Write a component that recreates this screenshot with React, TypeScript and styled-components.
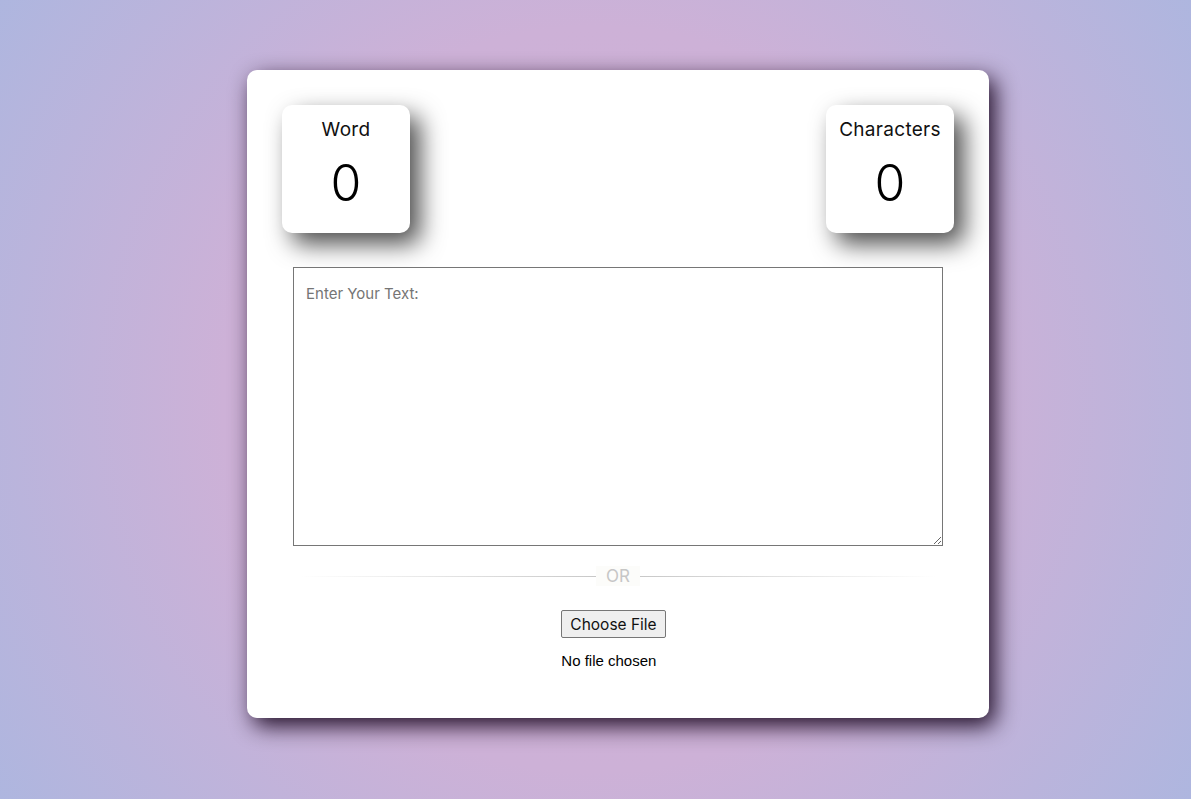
import React from "react";
import styled, { createGlobalStyle } from "styled-components";

const GlobalStyle = createGlobalStyle`
  html, body {
    margin: 0;
    padding: 0;
  }
  body {
    min-height: 799px;
    background: radial-gradient(circle at 50% 50%, #d2b0d6 0%, #cdb1d7 52%, #aeb6df 100%);
    font-family: Inter, "Open Sans", sans-serif;
  }
`;

const Page = styled.div`
  min-height: 799px;
  box-sizing: border-box;
  padding: 70px 0 0 247px;
`;

const Card = styled.main`
  width: 742px;
  height: 648px;
  box-sizing: border-box;
  background: #ffffff;
  border-radius: 10px;
  padding: 35px;
  box-shadow: 6px 8px 22px rgba(20, 0, 25, 0.92);
  display: flex;
  flex-direction: column;
  align-items: center;
`;

const StatsRow = styled.div`
  width: 100%;
  display: flex;
  justify-content: space-between;
`;

const StatBox = styled.div`
  width: 128px;
  height: 128px;
  border-radius: 10px;
  background: #ffffff;
  box-shadow: 10px 11px 25px rgba(0, 0, 0, 0.7);
  display: flex;
  flex-direction: column;
  align-items: center;
  box-sizing: border-box;
  padding-top: 14px;
`;

const StatLabel = styled.div`
  font-size: 19px;
  letter-spacing: 0.3px;
  line-height: 22px;
  color: #111;
`;

const StatValue = styled.div`
  font-size: 50px;
  line-height: 60px;
  margin-top: 12px;
  color: #000;
  font-weight: 300;
`;

const TextArea = styled.textarea`
  margin-top: 34px;
  width: 650px;
  height: 279px;
  box-sizing: border-box;
  border: 1px solid #767676;
  border-radius: 0;
  padding: 16px 12px;
  font-family: Inter, "Open Sans", sans-serif;
  font-size: 15px;
  color: #222;
  &::placeholder {
    color: #757575;
  }
`;

const Divider = styled.div`
  width: 636px;
  margin-top: 20px;
  display: flex;
  align-items: center;
`;

const Line = styled.div<{ $dir: "left" | "right" }>`
  flex: 1;
  height: 1px;
  background: linear-gradient(
    to ${(p) => p.$dir},
    rgba(200, 200, 200, 0),
    rgba(200, 200, 200, 1)
  );
`;

const OrLabel = styled.span`
  padding: 0 10px;
  font-size: 17px;
  line-height: 20px;
  color: #c6c6c6;
  background: #fcfcfa;
`;

const FileArea = styled.div`
  margin-top: 24px;
  margin-right: 9px;
  display: flex;
  flex-direction: column;
  align-items: flex-start;
`;

const FileButton = styled.button`
  height: 28px;
  padding: 0 8px;
  border: 1px solid #767676;
  border-radius: 2px;
  background: #efefef;
  font-family: Inter, "Open Sans", sans-serif;
  font-size: 15.5px;
  color: #111;
`;

const FileStatus = styled.span`
  margin-top: 14px;
  font-family: "Liberation Sans", Arial, sans-serif;
  font-size: 15px;
  line-height: 18px;
  color: #000;
`;

export default function App() {
  return (
    <>
      <GlobalStyle />
      <Page>
        <Card>
          <StatsRow>
            <StatBox>
              <StatLabel>Word</StatLabel>
              <StatValue>0</StatValue>
            </StatBox>
            <StatBox>
              <StatLabel>Characters</StatLabel>
              <StatValue>0</StatValue>
            </StatBox>
          </StatsRow>
          <TextArea placeholder="Enter Your Text:" />
          <Divider>
            <Line $dir="right" />
            <OrLabel>OR</OrLabel>
            <Line $dir="left" />
          </Divider>
          <FileArea>
            <FileButton type="button">Choose File</FileButton>
            <FileStatus>No file chosen</FileStatus>
          </FileArea>
        </Card>
      </Page>
    </>
  );
}
